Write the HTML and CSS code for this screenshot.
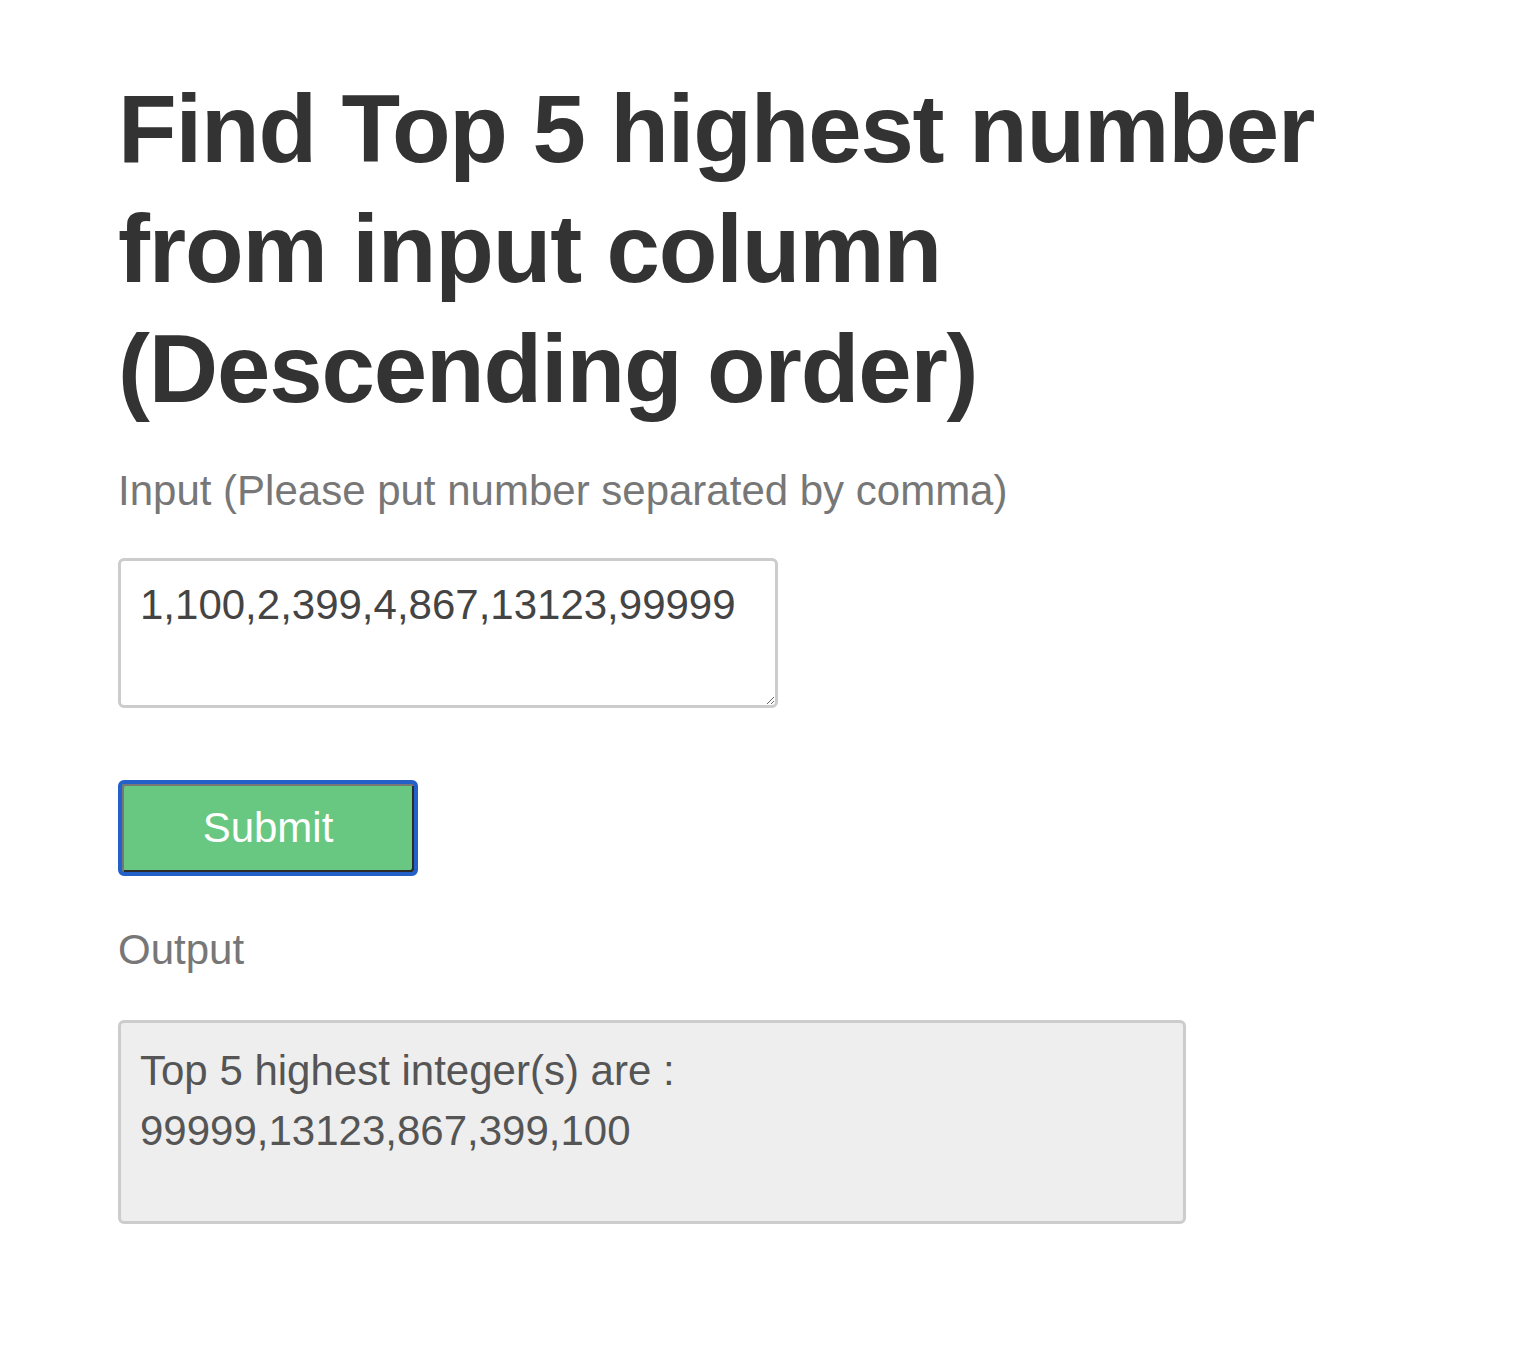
FILE: index.html
```html
<!DOCTYPE html>
<html>
<head>
<meta charset="utf-8">
<link rel="stylesheet" href="styles.css">
</head>
<body>
<main class="page">
  <h1 class="title">Find Top 5 highest number from input column (Descending order)</h1>
  <label class="label label-input" for="nums">Input (Please put number separated by comma)</label>
  <textarea id="nums" class="input-box">1,100,2,399,4,867,13123,99999</textarea>
  <button class="submit" type="button">Submit</button>
  <div class="label label-output">Output</div>
  <div class="output-box">Top 5 highest integer(s) are :<br>99999,13123,867,399,100</div>
</main>
</body>
</html>
```
FILE: styles.css
```css
html, body {
  margin: 0;
  padding: 0;
  background: #fff;
}
.page {
  padding: 69px 0 0 118px;
  font-family: "Liberation Sans", Arial, Helvetica, sans-serif;
  display: flex;
  flex-direction: column;
  align-items: flex-start;
}
.title {
  margin: 0;
  width: 1240px;
  font-size: 96px;
  line-height: 120px;
  font-weight: bold;
  letter-spacing: -1.15px;
  color: #333;
}
.label {
  display: block;
  font-size: 42px;
  line-height: 56px;
  color: #777;
}
.label-input {
  margin-top: 34px;
}
.input-box {
  margin-top: 39px;
  box-sizing: border-box;
  width: 660px;
  height: 150px;
  border: 3px solid #ccc;
  border-radius: 6px;
  padding: 16px 19px;
  font-family: "Liberation Sans", Arial, sans-serif;
  font-size: 42px;
  line-height: 56px;
  color: #444;
  resize: both;
  outline: none;
}
.submit {
  margin-top: 72px;
  box-sizing: border-box;
  width: 300px;
  height: 96px;
  background: #68c882;
  color: #fff;
  font-family: "Liberation Sans", Arial, sans-serif;
  font-size: 42px;
  border: 4px solid #2360c8;
  border-radius: 6px;
  box-shadow: inset 2px 2px 0 #777, inset -2px -2px 0 #2b2b2b;
  padding: 0;
  outline: none;
}
.label-output {
  margin-top: 46px;
}
.output-box {
  margin-top: 42px;
  box-sizing: border-box;
  width: 1068px;
  height: 204px;
  background: #eee;
  border: 3px solid #ccc;
  border-radius: 6px;
  padding: 18px 19px;
  font-size: 42px;
  line-height: 60px;
  color: #555;
}
```
